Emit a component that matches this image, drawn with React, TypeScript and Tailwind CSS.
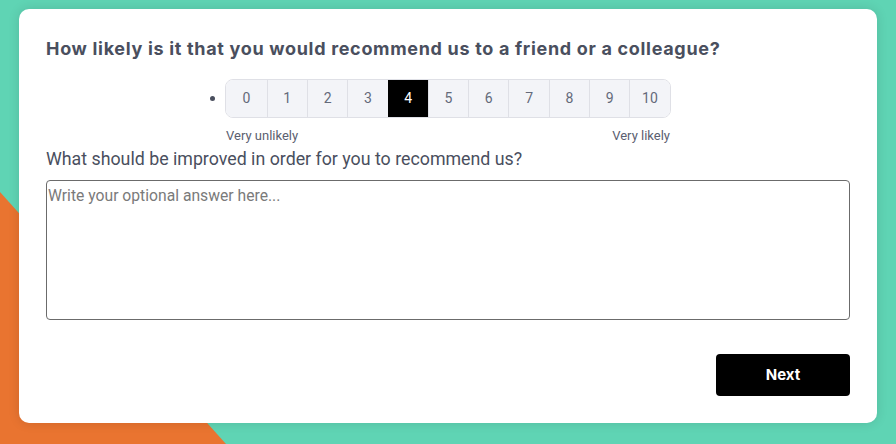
import React, { useState } from 'react';

const SCORES = [0, 1, 2, 3, 4, 5, 6, 7, 8, 9, 10];

export default function App() {
  const [score, setScore] = useState(4);
  const [answer, setAnswer] = useState('');

  return (
    <div className="relative h-[444px] w-[896px] overflow-hidden bg-[#5fd4b4] px-[19px] pt-[9px] font-['Roboto',sans-serif]">
      {/* orange corner behind the card */}
      <svg className="absolute left-0 top-0" width="896" height="444" viewBox="0 0 896 444">
        <polygon points="0,192 226,444 0,444" fill="#e97430" />
      </svg>

      <div className="relative flex h-[414px] flex-col rounded-[10px] bg-white px-[27px] pt-[27px] shadow-[0_0_12px_rgba(0,0,0,0.12)]">
        <h1 className="font-['Inter',sans-serif] text-[18px] leading-[26px] font-bold tracking-[0.68px] text-[#4a4f5e]">
          How likely is it that you would recommend us to a friend or a colleague?
        </h1>

        <div className="mt-[17px] flex flex-col items-center">
          <div className="relative">
            <span className="absolute left-[-15px] top-[17px] h-[5px] w-[5px] rounded-full bg-[#4a4f5e]" />
            <ul className="flex rounded-[8px] border border-[#dfe0e6] text-[#646a7a]">
              {SCORES.map((n, i) => (
                <li key={n} className="flex">
                  <button
                    onClick={() => setScore(n)}
                    className={`h-[37px] w-[40.3px] text-[14px] ${
                      i > 0 ? 'border-l border-[#dfe0e6]' : ''
                    } ${i === 0 ? 'rounded-l-[7px]' : ''} ${i === 10 ? 'rounded-r-[7px]' : ''} ${
                      score === n ? 'border-black bg-black text-white' : 'bg-[#f3f4f8]'
                    }`}
                  >
                    {n}
                  </button>
                </li>
              ))}
            </ul>
          </div>
          <div className="mt-[9px] flex w-[444px] justify-between text-[13px] leading-[18px] text-[#5b6070]">
            <span>Very unlikely</span>
            <span>Very likely</span>
          </div>
        </div>

        <label className="mt-[2px] text-[17.8px] leading-[24px] text-[#4a4f5e]">
          What should be improved in order for you to recommend us?
        </label>
        <textarea
          value={answer}
          onChange={e => setAnswer(e.target.value)}
          placeholder="Write your optional answer here..."
          className="mt-[9px] h-[140px] w-full resize-none rounded-[4px] border border-[#6b6b6b] px-[1px] py-[4px] text-[15.7px] leading-[22px] text-[#333] placeholder:text-[#7a7a7a] outline-none"
        />

        <div className="mt-[34px] flex justify-end">
          <button className="h-[42px] w-[134px] rounded-[4px] bg-black font-['Inter',sans-serif] text-[15px] font-bold text-white">
            Next
          </button>
        </div>
      </div>
    </div>
  );
}
